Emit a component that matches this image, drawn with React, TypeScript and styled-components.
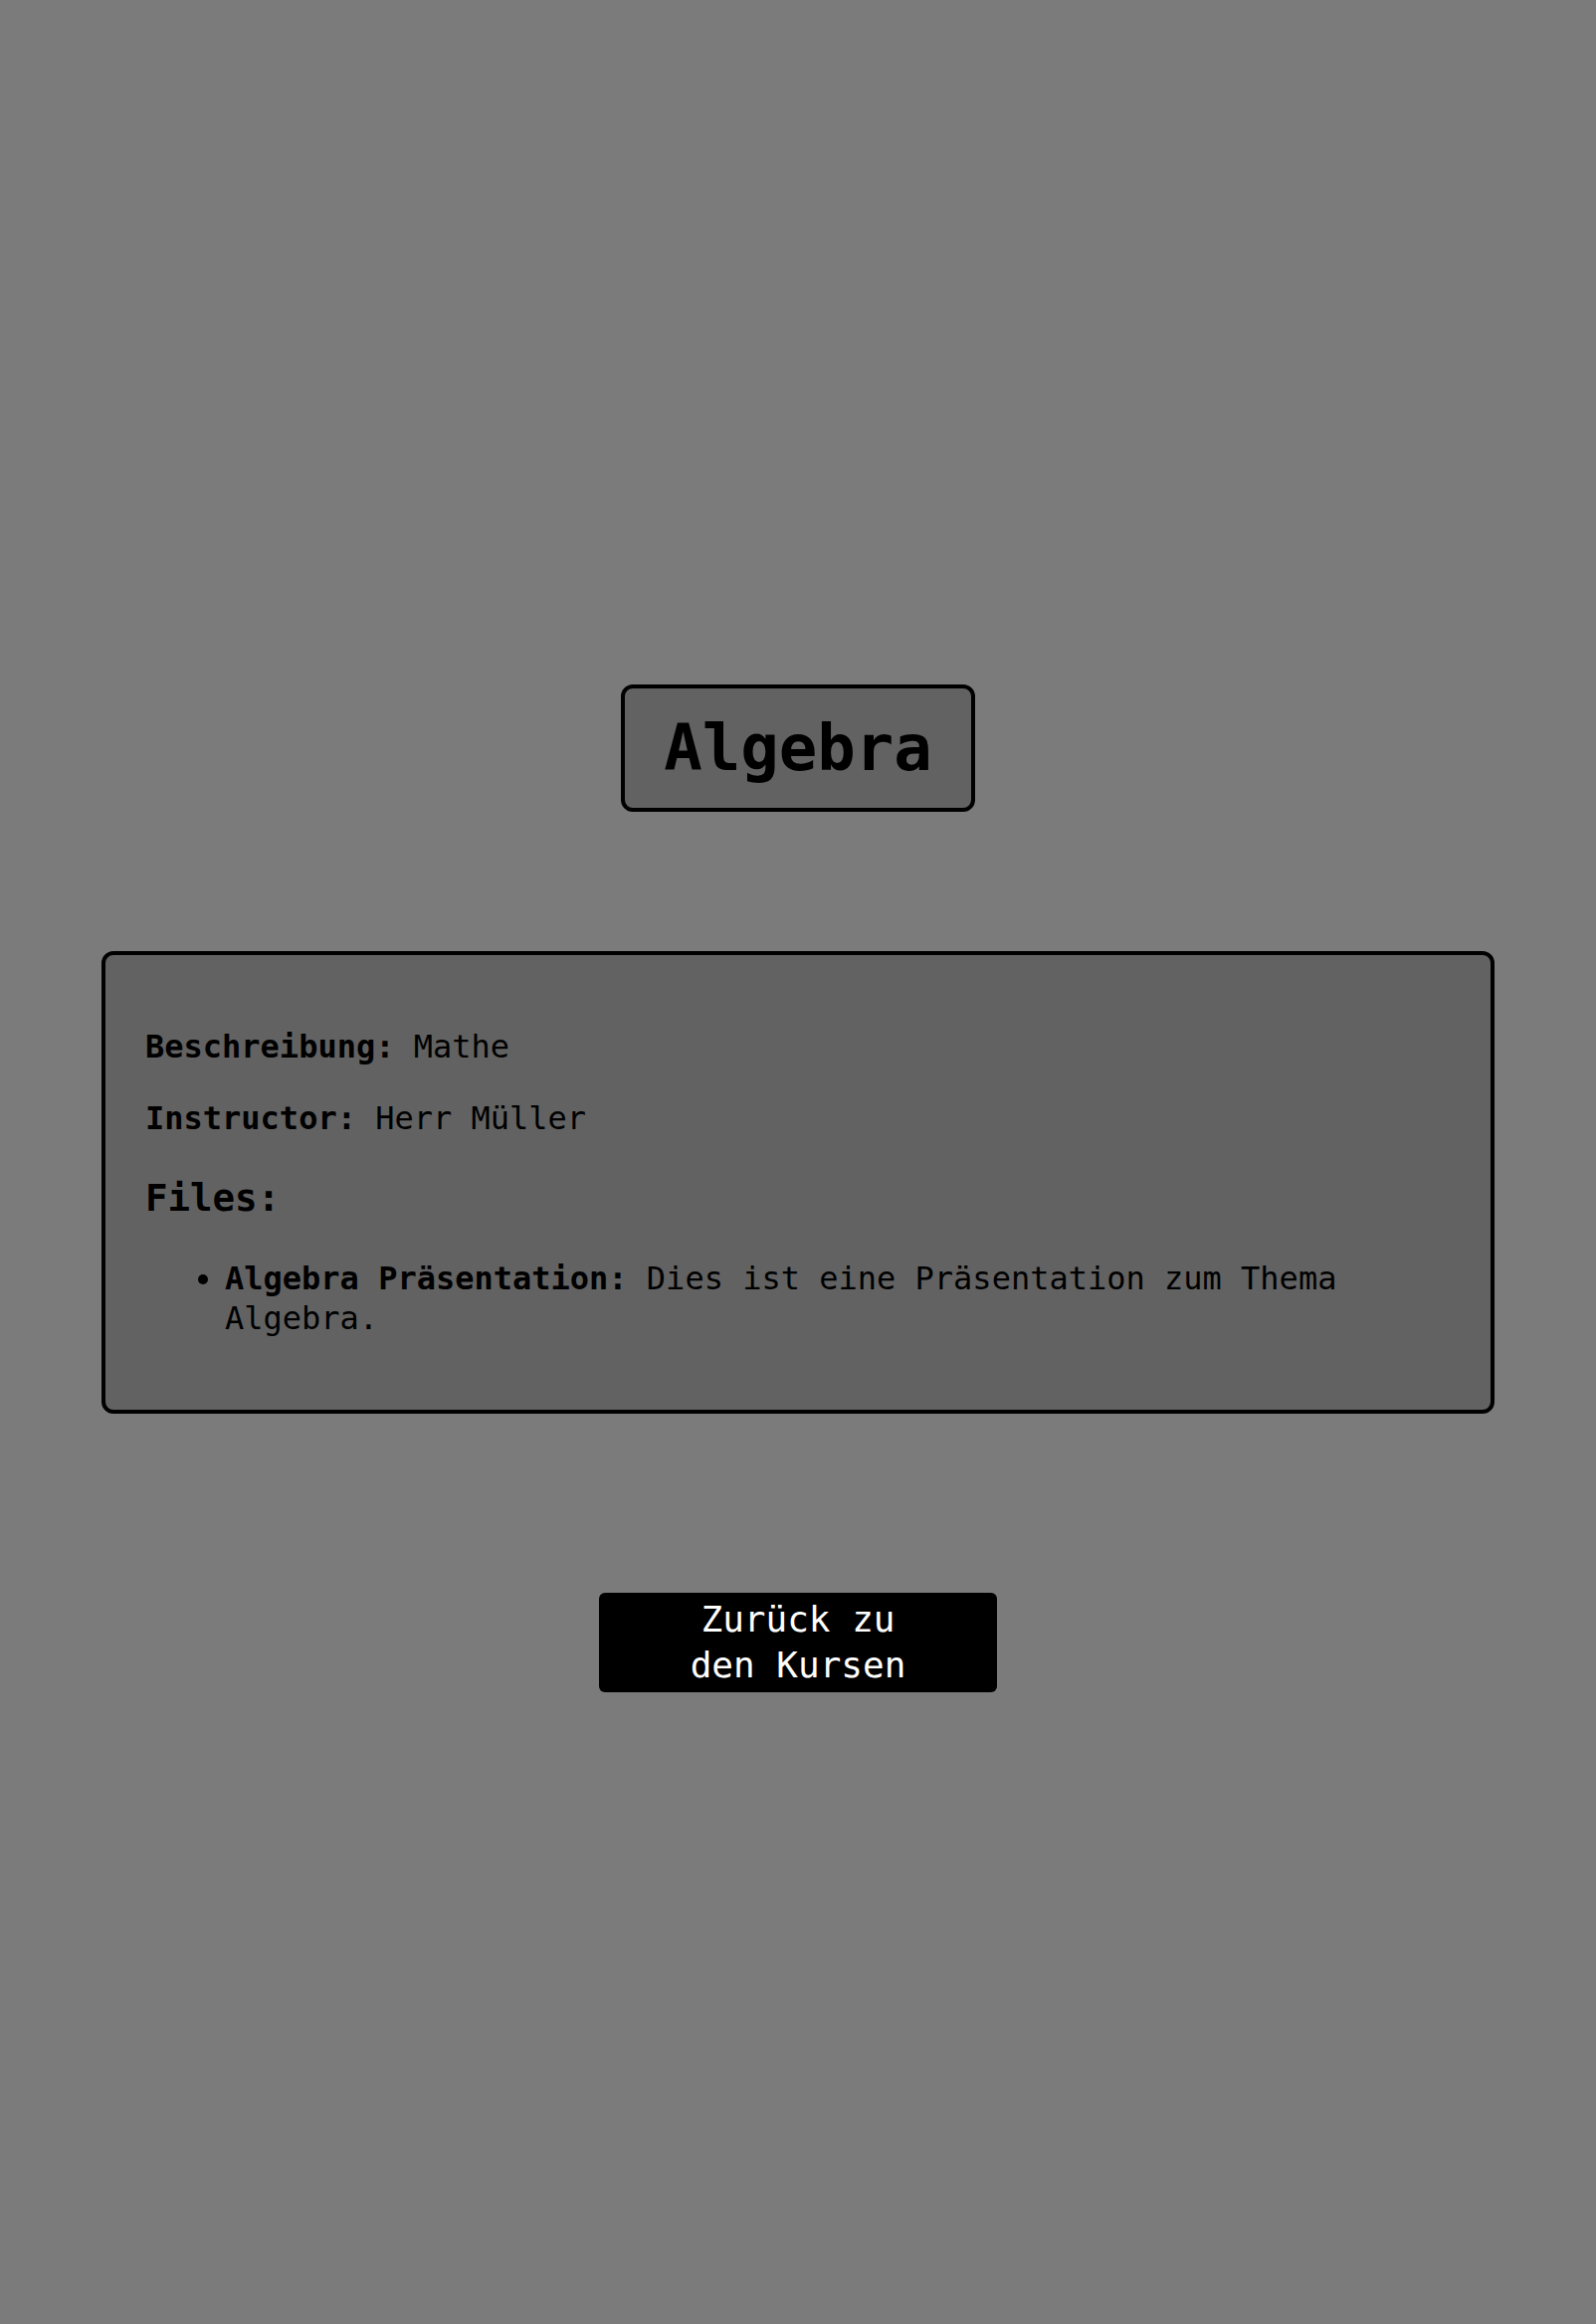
import React from "react";
import styled, { createGlobalStyle } from "styled-components";

const GlobalStyle = createGlobalStyle`
  html, body {
    margin: 0;
    padding: 0;
    background: #7b7b7b;
  }
  body {
    font-family: "DejaVu Sans Mono", "Liberation Mono", monospace;
    font-size: 32px;
    line-height: 1.25;
    color: #000;
  }
`;

const Page = styled.main`
  min-height: 100vh;
  box-sizing: border-box;
  padding-top: 688px;
  display: flex;
  flex-direction: column;
  align-items: center;
`;

const TitleBox = styled.div`
  border: 4px solid #000;
  border-radius: 12px;
  background: #626262;
  padding: 20px 39px;
`;

const Title = styled.h1`
  margin: 0;
  font-size: 64px;
  line-height: 80px;
  font-weight: 700;
`;

const Card = styled.section`
  margin-top: 140px;
  width: 1400px;
  box-sizing: border-box;
  border: 4px solid #000;
  border-radius: 12px;
  background: #626262;
  padding: 40px;
`;

const InfoRow = styled.p`
  margin: 32px 0;
  line-height: 40px;
`;

const Label = styled.strong`
  font-weight: 700;
`;

const SectionTitle = styled.h3`
  margin: 37px 0;
  font-size: 37.44px;
  line-height: 1.25;
  font-weight: 700;
`;

const FileList = styled.ul`
  margin: 32px 0;
  padding-left: 80px;
  line-height: 40px;
`;

const FileItem = styled.li`
  list-style: disc;
`;

const BackButton = styled.button`
  margin-top: 180px;
  width: 400px;
  height: 100px;
  box-sizing: border-box;
  border: none;
  border-radius: 6px;
  background: #000;
  color: #fff;
  font-family: "DejaVu Sans Mono", "Liberation Mono", monospace;
  font-size: 36px;
  line-height: 46px;
  padding: 4px 60px;
  text-align: center;
  cursor: pointer;
`;

export default function App() {
  return (
    <>
      <GlobalStyle />
      <Page>
        <TitleBox>
          <Title>Algebra</Title>
        </TitleBox>
        <Card>
          <InfoRow>
            <Label>Beschreibung:</Label> Mathe
          </InfoRow>
          <InfoRow>
            <Label>Instructor:</Label> Herr Müller
          </InfoRow>
          <SectionTitle>Files:</SectionTitle>
          <FileList>
            <FileItem>
              <Label>Algebra Präsentation:</Label> Dies ist eine Präsentation zum Thema Algebra.
            </FileItem>
          </FileList>
        </Card>
        <BackButton>Zurück zu den Kursen</BackButton>
      </Page>
    </>
  );
}
